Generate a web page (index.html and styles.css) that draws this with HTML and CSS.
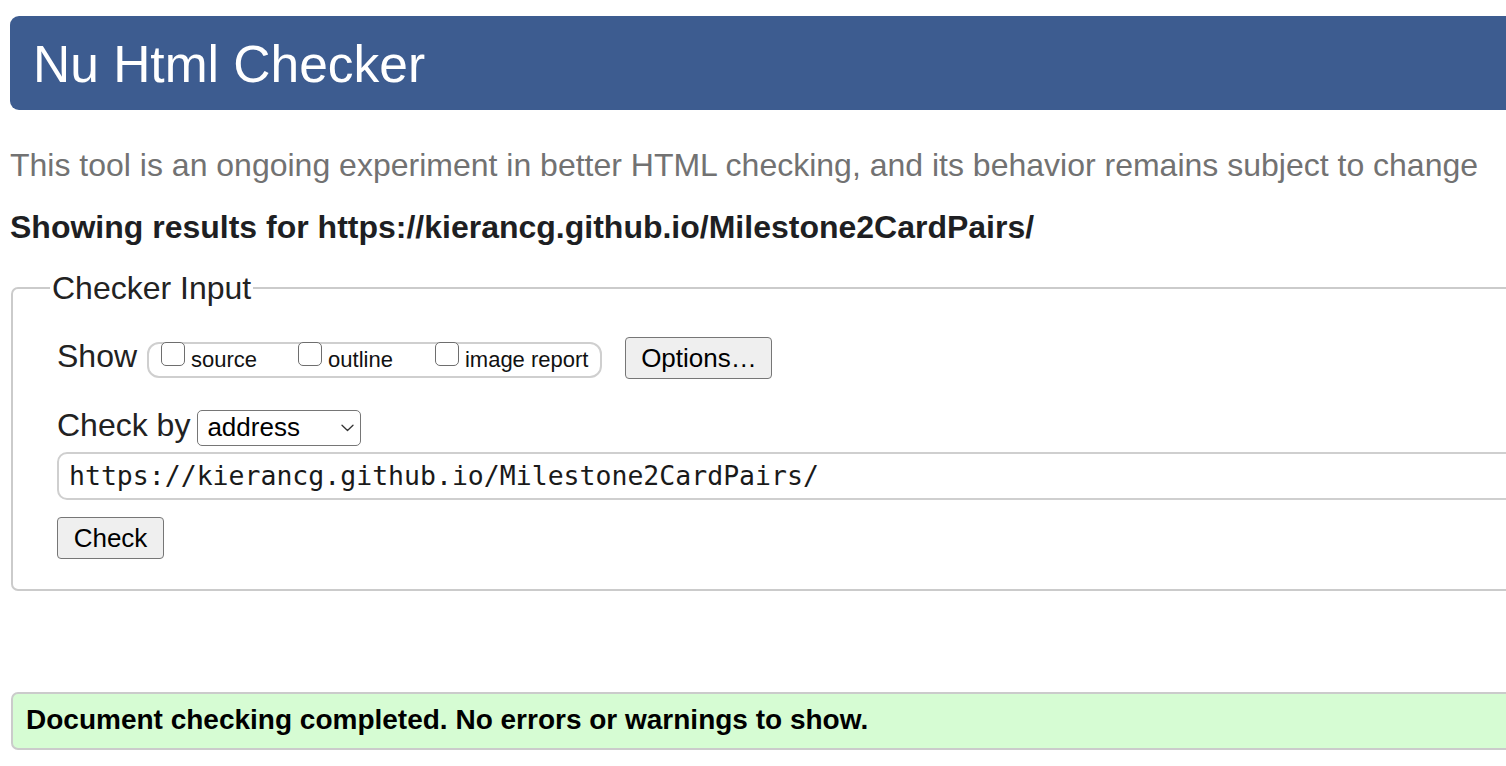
FILE: index.html
```html
<!DOCTYPE html>
<html lang="en">
<head>
<meta charset="utf-8">
<title>Nu Html Checker</title>
<link rel="stylesheet" href="styles.css">
</head>
<body>
<div class="page">
  <header class="masthead">
    <h1 class="title">Nu Html Checker</h1>
  </header>
  <p class="intro">This tool is an ongoing experiment in better HTML checking, and its behavior remains subject to change</p>
  <h2 class="results-for">Showing results for https://kierancg.github.io/Milestone2CardPairs/</h2>
  <form class="checker">
    <fieldset class="checker-input">
      <legend class="legend">Checker Input</legend>
      <div class="row row-show">
        <span class="label">Show</span>
        <div class="opts">
          <label class="opt"><input type="checkbox" class="cb">source</label>
          <label class="opt opt-gap"><input type="checkbox" class="cb">outline</label>
          <label class="opt opt-gap2"><input type="checkbox" class="cb">image report</label>
        </div>
        <button type="button" class="btn btn-options">Options…</button>
      </div>
      <div class="row row-by">
        <span class="label">Check by</span>
        <div class="select-wrap">
          <select class="select"><option>address</option></select>
          <svg class="chev" width="13" height="8" viewBox="0 0 13 8" aria-hidden="true"><polyline points="1,1.2 6.5,6.5 12,1.2" fill="none" stroke="#333" stroke-width="1.3" stroke-linecap="round" stroke-linejoin="round"/></svg>
        </div>
      </div>
      <div class="row row-url">
        <input class="url" type="text" value="https://kierancg.github.io/Milestone2CardPairs/">
      </div>
      <div class="row row-check">
        <button type="button" class="btn btn-check">Check</button>
      </div>
    </fieldset>
  </form>
  <div class="success">
    <p class="success-text">Document checking completed. No errors or warnings to show.</p>
  </div>
</div>
</body>
</html>
```

FILE: styles.css
```css
html, body {
  margin: 0;
  padding: 0;
  overflow: hidden;
  background: #fff;
}

body {
  font-family: "Liberation Sans", Arial, Helvetica, sans-serif;
  color: #222;
}

.page {
  width: 1560px;
  padding: 16px 0 0 10px;
}

.masthead {
  height: 94px;
  background: #3d5c90;
  border-radius: 9px 0 0 9px;
  display: flex;
  align-items: center;
  padding-left: 23px;
}

.title {
  margin: 0;
  font-size: 51.5px;
  font-weight: 400;
  line-height: 58px;
  color: #fff;
  transform: translateY(1px);
}

.intro {
  margin: 37px 0 0 0;
  font-size: 32px;
  line-height: 36px;
  color: #727272;
  white-space: nowrap;
}

.results-for {
  margin: 26px 0 0 0;
  font-size: 32px;
  font-weight: 700;
  line-height: 36px;
  color: #1e1f23;
  white-space: nowrap;
}

.checker {
  margin: 0;
}

.checker-input {
  margin: 25px 0 0 1px;
  border: 2px solid #cbcbcb;
  border-radius: 7px;
  padding: 31px 0 30px 44px;
  min-width: 0;
}

.legend {
  font-size: 32px;
  line-height: 36px;
  padding: 0 2px;
  margin-left: -7px;
  color: #222;
}

.row {
  display: flex;
  align-items: baseline;
}

.label {
  font-size: 32px;
  line-height: 36px;
  color: #222;
}

.opts {
  display: flex;
  align-items: baseline;
  margin-left: 10px;
  border: 2px solid #cfcfcf;
  border-radius: 12px;
  padding: 0 12px 3px 12px;
}

.opt {
  display: block;
  font-size: 22px;
  line-height: normal;
  color: #111;
  white-space: nowrap;
}

.opt-gap {
  margin-left: 41px;
}

.opt-gap2 {
  margin-left: 42px;
}

.cb {
  -webkit-appearance: none;
  appearance: none;
  display: inline-block;
  width: 24px;
  height: 24px;
  box-sizing: border-box;
  border: 1.5px solid #6e6e6e;
  border-radius: 5px;
  background: #fff;
  margin: -2px 6px 1px 0;
  vertical-align: baseline;
}

.btn {
  font-family: "Liberation Sans", Arial, Helvetica, sans-serif;
  font-size: 26px;
  line-height: 30px;
  color: #000;
  background: #efefef;
  border: 1px solid #767676;
  border-radius: 4px;
  padding: 5px 14px;
  margin: 0;
}

.btn-options {
  margin-left: 23px;
  width: 147px;
}

.row-by {
  margin-top: 28px;
}

.select-wrap {
  position: relative;
  margin-left: 7px;
}

.select {
  -webkit-appearance: none;
  appearance: none;
  display: block;
  width: 164px;
  height: 36px;
  box-sizing: border-box;
  border: 1px solid #767676;
  border-radius: 5px;
  background: #fff;
  font-family: "Liberation Sans", Arial, Helvetica, sans-serif;
  font-size: 26px;
  line-height: 30px;
  padding: 1px 0 3px 9px;
  color: #000;
  margin: 0;
}

.chev {
  position: absolute;
  right: 7px;
  top: 14px;
  pointer-events: none;
}

.row-url {
  margin-top: 6px;
}

.url {
  flex: 1;
  min-width: 0;
  height: 48px;
  box-sizing: border-box;
  border: 2px solid #cfcfcf;
  border-radius: 10px;
  padding: 0 10px 2px 10px;
  font-family: "DejaVu Sans Mono", "Liberation Mono", monospace;
  font-size: 26.5px;
  color: #1a1a1a;
  background: #fff;
  margin: 0;
}

.row-check {
  margin-top: 17px;
}

.btn-check {
  width: 107px;
  padding: 5px 0;
}

.success {
  margin: 101px 0 0 1px;
  border: 2px solid #cbcbcb;
  border-radius: 7px;
  background: #d6fcd3;
  padding: 10px 12px 12px 13px;
}

.success-text {
  margin: 0;
  font-size: 28px;
  font-weight: 700;
  line-height: 32px;
  color: #000;
  white-space: nowrap;
}
```
